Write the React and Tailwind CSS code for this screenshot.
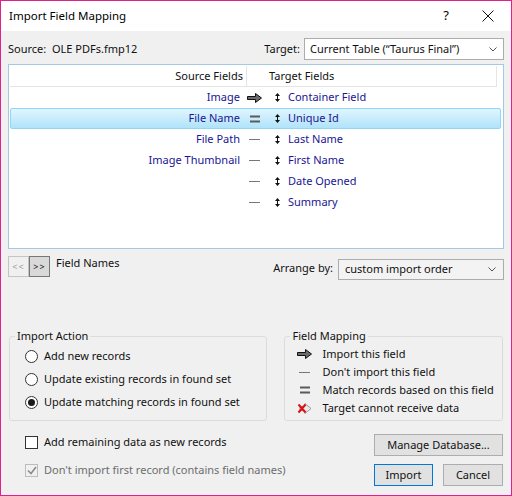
import { useState } from 'react';

const font = { fontFamily: '"Noto Sans", "Open Sans", sans-serif' };

const rows = [
  { source: 'Image', kind: 'arrow', target: 'Container Field' },
  { source: 'File Name', kind: 'match', target: 'Unique Id', selected: true },
  { source: 'File Path', kind: 'dash', target: 'Last Name' },
  { source: 'Image Thumbnail', kind: 'dash', target: 'First Name' },
  { source: '', kind: 'dash', target: 'Date Opened' },
  { source: '', kind: 'dash', target: 'Summary' },
];

const ArrowIcon = () => (
  <svg width="15" height="10" viewBox="0 0 15 10">
    <path d="M0.5 3.5h8v-3l6 4.5-6 4.5v-3h-8z" fill="#6b6b6b" stroke="#111" strokeWidth="1" />
  </svg>
);

const MatchIcon = () => (
  <svg width="10" height="8" viewBox="0 0 10 8">
    <rect x="0" y="0.5" width="10" height="2" fill="#5a5a5a" />
    <rect x="0" y="5.5" width="10" height="2" fill="#5a5a5a" />
  </svg>
);

const DashIcon = () => (
  <svg width="11" height="3" viewBox="0 0 11 3">
    <rect x="0" y="1" width="11" height="1" fill="#777" />
  </svg>
);

const BlockedIcon = () => (
  <svg width="15" height="11" viewBox="0 0 15 11">
    <path d="M3 3.5h5v-3l6 5-6 5v-3h-5z" fill="#e8e8e8" stroke="#9a9a9a" strokeWidth="1" />
    <path d="M1.5 1.5l7 8M8.5 1.5l-7 8" stroke="#e01010" strokeWidth="2" />
  </svg>
);

const UpDown = () => (
  <svg width="5" height="9" viewBox="0 0 5 9">
    <path d="M2.5 0l2.5 3h-5z M2.5 9l2.5-3h-5z" fill="#111" />
    <rect x="2" y="3" width="1" height="3" fill="#111" />
  </svg>
);

const Chevron = () => (
  <svg width="8" height="5" viewBox="0 0 8 5">
    <path d="M0.5 0.5l3.5 3.5 3.5-3.5" fill="none" stroke="#555" strokeWidth="1" />
  </svg>
);

const Radio = ({ checked }) => (
  <span className="w-[13px] h-[13px] rounded-full border border-[#333] bg-white flex items-center justify-center">
    {checked && <span className="w-[7px] h-[7px] rounded-full bg-[#1a1a1a]" />}
  </span>
);

const rowIcon = (kind) => {
  if (kind === 'arrow') return <ArrowIcon />;
  if (kind === 'match') return <MatchIcon />;
  return <DashIcon />;
};

const Group = ({ label, className, children }) => (
  <div className={`relative border border-[#dcdcdc] rounded-[3px] ${className}`}>
    <span className="absolute -top-[9px] left-[5px] px-[2px] bg-[#f0f0f0] leading-[16px] text-[#111]">
      {label}
    </span>
    {children}
  </div>
);

export default function App() {
  const [action, setAction] = useState(2);
  const [addRemaining, setAddRemaining] = useState(false);

  return (
    <div
      style={font}
      className="w-[512px] h-[496px] border border-[#e0208f] bg-[#f0f0f0] flex flex-col text-[11px] text-[#111] overflow-hidden"
    >
      <div className="h-[30px] bg-white flex items-center shrink-0">
        <span className="ml-[8px] text-[11.5px] text-black">Import Field Mapping</span>
        <span className="ml-auto mr-[33px] text-[13px] text-black">?</span>
        <svg width="12" height="12" viewBox="0 0 12 12" className="mr-[17px]">
          <path d="M0.5 0.5l11 11M11.5 0.5l-11 11" stroke="#111" strokeWidth="1" />
        </svg>
      </div>

      <div className="flex items-center h-[22px] mt-[7px] px-[7px]">
        <span>Source:&nbsp; OLE PDFs.fmp12</span>
        <span className="ml-auto mr-[4px]">Target:</span>
        <div className="w-[200px] h-[22px] border border-[#acacac] bg-white flex items-center pl-[5px] pr-[6px]">
          <span className="text-[#111]">Current Table (“Taurus Final”)</span>
          <span className="ml-auto">
            <Chevron />
          </span>
        </div>
      </div>

      <div className="mx-[7px] mt-[4px] h-[185px] border border-[#a6c8e2] bg-white p-[1px] flex flex-col">
        <div className="flex h-[21px] border-b border-[#e5e5e5] w-[487px] shrink-0">
          <div className="w-[237px] border-r border-[#e5e5e5] text-right pr-[3px] leading-[20px]">Source Fields</div>
          <div className="flex-1 border-r border-[#e5e5e5] pl-[22px] leading-[20px]">Target Fields</div>
        </div>
        {rows.map((r) => (
          <div
            key={r.target}
            className={`flex items-center h-[21px] w-[491px] text-[#201593] ${
              r.selected ? 'border border-[#8fd6f8] rounded-[2px] bg-gradient-to-b from-[#e0f5fe] to-[#b0e3fa]' : ''
            }`}
          >
            <div className={`text-right ${r.selected ? 'w-[229px]' : 'w-[230px]'}`}>{r.source}</div>
            <div className="w-[29px] flex justify-center">{rowIcon(r.kind)}</div>
            <div className="w-[17px] flex justify-center">
              <UpDown />
            </div>
            <span className="ml-[2px]">{r.target}</span>
          </div>
        ))}
      </div>

      <div className="flex items-start px-[7px] mt-[7px]">
        <div className="flex">
          <div className="w-[21px] h-[21px] border border-[#c4c4c4] bg-[#f0f0f0] flex items-center justify-center text-[9px] text-[#9a9a9a] tracking-[1px]">
            &lt;&lt;
          </div>
          <div className="w-[21px] h-[21px] border border-[#777] bg-[#d9d9d9] flex items-center justify-center text-[9px] text-[#111] tracking-[1px]">
            &gt;&gt;
          </div>
        </div>
        <span className="ml-[6px] mt-[-1px]">Field Names</span>
        <span className="ml-auto mt-[4px] mr-[5px]">Arrange by:</span>
        <div className="mt-[3px] w-[166px] h-[21px] border border-[#acacac] bg-[#f3f3f3] flex items-center pl-[6px] pr-[7px]">
          <span>custom import order</span>
          <span className="ml-auto">
            <Chevron />
          </span>
        </div>
      </div>

      <div className="flex mt-[56px] px-[8px] gap-[17px]">
        <Group label="Import Action" className="w-[259px] h-[85px] pt-[8px] pl-[15px]">
          {['Add new records', 'Update existing records in found set', 'Update matching records in found set'].map(
            (label, i) => (
              <div key={label} className="flex items-center h-[23px] gap-[6px] cursor-pointer" onClick={() => setAction(i)}>
                <Radio checked={action === i} />
                <span>{label}</span>
              </div>
            ),
          )}
        </Group>
        <Group label="Field Mapping" className="w-[219px] h-[85px] pt-[8px] pl-[12px]">
          {[
            [<ArrowIcon key="a" />, 'Import this field'],
            [<DashIcon key="d" />, "Don't import this field"],
            [<MatchIcon key="m" />, 'Match records based on this field'],
            [<BlockedIcon key="b" />, 'Target cannot receive data'],
          ].map(([icon, label]) => (
            <div key={label} className="flex items-center h-[18px]">
              <div className="w-[15px] flex justify-center">{icon}</div>
              <span className="ml-[10px]">{label}</span>
            </div>
          ))}
        </Group>
      </div>

      <div className="flex px-[8px] mt-[13px]">
        <div className="flex flex-col pl-[16px] pt-[1px]">
          <div className="flex items-center h-[14px] gap-[6px] cursor-pointer" onClick={() => setAddRemaining(!addRemaining)}>
            <span className="w-[13px] h-[13px] border border-[#333] bg-white flex items-center justify-center">
              {addRemaining && (
                <svg width="10" height="9" viewBox="0 0 10 9">
                  <path d="M1 4.5l3 3 5-6.5" fill="none" stroke="#111" strokeWidth="1.6" />
                </svg>
              )}
            </span>
            <span>Add remaining data as new records</span>
          </div>
          <div className="flex items-center h-[14px] gap-[6px] mt-[14px] text-[#6d6d6d]">
            <span className="w-[13px] h-[13px] border border-[#bcbcbc] bg-[#f0f0f0] flex items-center justify-center">
              <svg width="10" height="9" viewBox="0 0 10 9">
                <path d="M1 4.5l3 3 5-6.5" fill="none" stroke="#8a8a8a" strokeWidth="1.6" />
              </svg>
            </span>
            <span>Don't import first record (contains field names)</span>
          </div>
        </div>
        <div className="ml-auto flex flex-col items-end">
          <button type="button" className="w-[129px] h-[22px] border border-[#adadad] bg-[#e1e1e1] text-[#111]">
            Manage Database...
          </button>
          <div className="flex gap-[10px] mt-[8px]">
            <button type="button" className="w-[59px] h-[22px] border border-[#0078d7] bg-[#e1e1e1] text-[#111]">
              Import
            </button>
            <button type="button" className="w-[60px] h-[22px] border border-[#adadad] bg-[#e1e1e1] text-[#111]">
              Cancel
            </button>
          </div>
        </div>
      </div>
    </div>
  );
}
